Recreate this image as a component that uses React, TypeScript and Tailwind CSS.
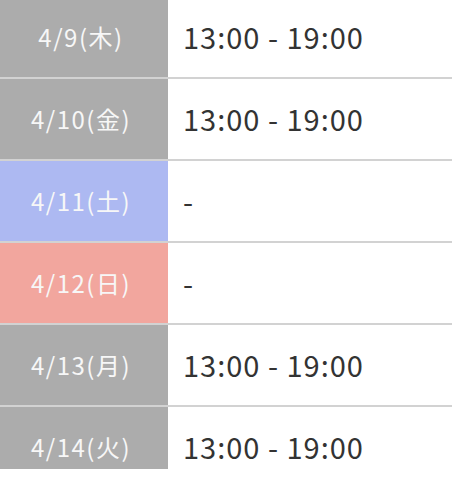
import React from "react";

type Row = { date: string; time: string; bg: string };

const rows: Row[] = [
  { date: "4/9(木)", time: "13:00 - 19:00", bg: "bg-[#acacac]" },
  { date: "4/10(金)", time: "13:00 - 19:00", bg: "bg-[#acacac]" },
  { date: "4/11(土)", time: "-", bg: "bg-[#adb9f2]" },
  { date: "4/12(日)", time: "-", bg: "bg-[#f2a69e]" },
  { date: "4/13(月)", time: "13:00 - 19:00", bg: "bg-[#acacac]" },
  { date: "4/14(火)", time: "13:00 - 19:00", bg: "bg-[#acacac]" },
];

export default function App() {
  return (
    <div
      className="w-[452px] h-[480px] bg-white overflow-hidden"
      style={{ fontFamily: '"Noto Sans CJK JP", "Noto Sans", sans-serif' }}
    >
      <div className="h-[469px] overflow-hidden">
        <div className="-mt-[3px] flex flex-col">
          {rows.map((r, i) => (
            <div key={i} className="flex h-[82px] border-b-2 border-[#d2d2d2]">
              <div
                className={`w-[168px] shrink-0 ${r.bg} flex items-center justify-center pr-[6px] text-[#f7f7f7] text-[24px] tracking-[1.5px]`}
              >
                {r.date}
              </div>
              <div className="flex-1 flex items-center pl-[15px] text-[#333333] text-[29px] tracking-[1px]">
                {r.time}
              </div>
            </div>
          ))}
        </div>
      </div>
    </div>
  );
}
